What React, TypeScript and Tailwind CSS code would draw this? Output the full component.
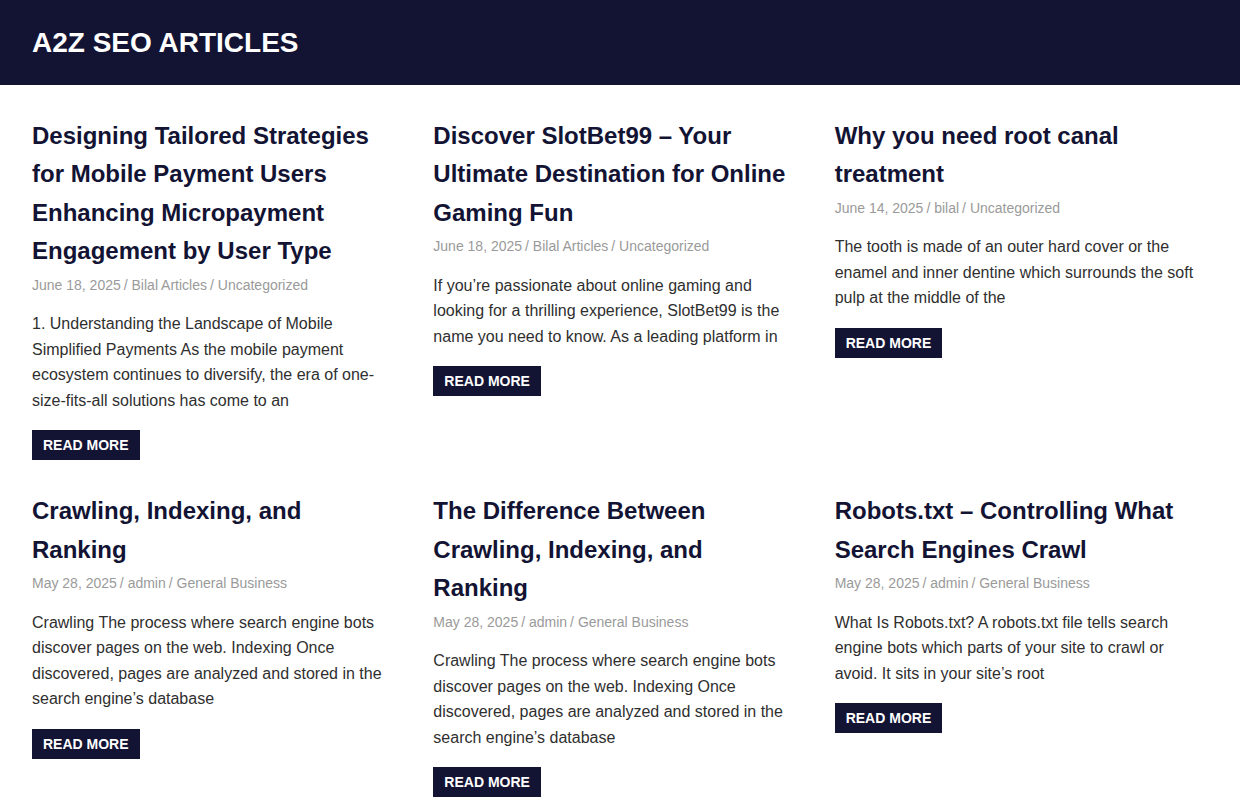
import React from 'react';

interface Post {
    title: string;
    date: string;
    author: string;
    category: string;
    excerpt: string;
}

const posts: Post[] = [
    {
        title: 'Designing Tailored Strategies for Mobile Payment Users Enhancing Micropayment Engagement by User Type',
        date: 'June 18, 2025',
        author: 'Bilal Articles',
        category: 'Uncategorized',
        excerpt:
            '1. Understanding the Landscape of Mobile Simplified Payments As the mobile payment ecosystem continues to diversify, the era of one-size-fits-all solutions has come to an',
    },
    {
        title: 'Discover SlotBet99 – Your Ultimate Destination for Online Gaming Fun',
        date: 'June 18, 2025',
        author: 'Bilal Articles',
        category: 'Uncategorized',
        excerpt:
            'If you’re passionate about online gaming and looking for a thrilling experience, SlotBet99 is the name you need to know. As a leading platform in',
    },
    {
        title: 'Why you need root canal treatment',
        date: 'June 14, 2025',
        author: 'bilal',
        category: 'Uncategorized',
        excerpt:
            'The tooth is made of an outer hard cover or the enamel and inner dentine which surrounds the soft pulp at the middle of the',
    },
    {
        title: 'Crawling, Indexing, and Ranking',
        date: 'May 28, 2025',
        author: 'admin',
        category: 'General Business',
        excerpt:
            'Crawling The process where search engine bots discover pages on the web. Indexing Once discovered, pages are analyzed and stored in the search engine’s database',
    },
    {
        title: 'The Difference Between Crawling, Indexing, and Ranking',
        date: 'May 28, 2025',
        author: 'admin',
        category: 'General Business',
        excerpt:
            'Crawling The process where search engine bots discover pages on the web. Indexing Once discovered, pages are analyzed and stored in the search engine’s database',
    },
    {
        title: 'Robots.txt – Controlling What Search Engines Crawl',
        date: 'May 28, 2025',
        author: 'admin',
        category: 'General Business',
        excerpt:
            'What Is Robots.txt? A robots.txt file tells search engine bots which parts of your site to crawl or avoid. It sits in your site’s root',
    },
];

function PostCard({ post }: { post: Post }) {
    return (
        <article className="flex flex-col items-start pr-2">
            <h2 className="text-[24px] leading-[38.4px] font-bold text-[#131334]">{post.title}</h2>
            <div className="mt-[3px] text-[14px] leading-[22.4px] text-[#9a9a9a]">
                <span>{post.date}</span>
                <span className="ml-[3px]">/ {post.author}</span>
                <span className="ml-[3px]">/ {post.category}</span>
            </div>
            <p className="mt-[15px] text-[16px] leading-[25.6px] text-[#2f2f2f]">{post.excerpt}</p>
            <a className="mt-[17px] inline-flex h-[30px] items-center bg-[#131334] px-[11px] text-[14px] font-bold text-white uppercase">
                Read More
            </a>
        </article>
    );
}

export default function App() {
    return (
        <div className="min-h-screen bg-white font-['Liberation_Sans',Arial,sans-serif]">
            <header className="flex h-[85px] items-center bg-[#131334] px-8">
                <h1 className="text-[28px] font-bold text-white">A2Z SEO ARTICLES</h1>
            </header>
            <main className="grid grid-cols-3 gap-x-7 gap-y-8 px-8 pt-8 pb-8">
                {posts.map((p, i) => (
                    <PostCard key={i} post={p} />
                ))}
            </main>
        </div>
    );
}
